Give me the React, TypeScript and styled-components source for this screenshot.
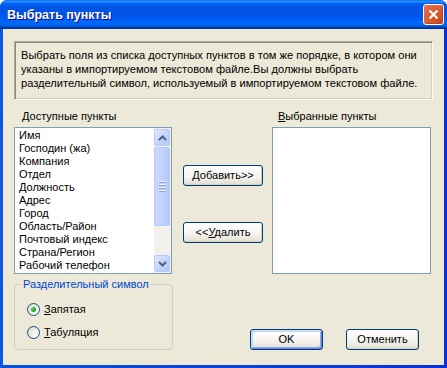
import React from 'react';
import styled, {createGlobalStyle} from 'styled-components';

const GlobalStyle = createGlobalStyle`
  html, body {
    margin: 0;
    padding: 0;
    background: #ffffff;
  }
  body {
    font-family: "Liberation Sans", Arial, sans-serif;
    font-size: 11px;
  }
`;

const AVAILABLE = [
  'Имя',
  'Господин (жа)',
  'Компания',
  'Отдел',
  'Должность',
  'Адрес',
  'Город',
  'Область/Район',
  'Почтовый индекс',
  'Страна/Регион',
  'Рабочий телефон',
];

const Window = styled.div`
  width: 447px;
  height: 368px;
  display: flex;
  flex-direction: column;
  background: linear-gradient(to right, #0831d9 0, #166aee 1px, #0855dd 2px, #0831d9 100%);
  border-radius: 7px 7px 0 0;
  overflow: hidden;
  color: #000;
`;

const TitleBar = styled.div`
  height: 29px;
  flex: none;
  display: flex;
  align-items: center;
  justify-content: space-between;
  padding: 0 3px 0 7px;
  background: linear-gradient(to bottom, #0058ee 0%, #3593ff 4%, #288eff 6%, #127dff 8%, #036ffc 10%, #0262ee 14%, #0057e5 20%, #0054e3 24%, #0055eb 56%, #005bf5 66%, #026afe 76%, #0062ef 86%, #0052d6 92%, #0040ab 94%, #003092 100%);
`;

const Title = styled.span`
  color: #fff;
  font-family: "Liberation Sans", Arial, sans-serif;
  font-weight: bold;
  font-size: 12.5px;
  text-shadow: 1px 1px #0f1089;
`;

const CloseButton = styled.div`
  width: 21px;
  height: 21px;
  box-sizing: border-box;
  border: 1px solid #fff;
  border-radius: 3px;
  background: radial-gradient(circle at 85% 85%, #c94a1c 0%, #dd5a33 55%, #e5765a 100%);
  box-shadow: inset -1px -1px #c0441a;
  display: flex;
  align-items: center;
  justify-content: center;
`;

const Client = styled.div`
  flex: 1;
  margin: 0 3px 3px 3px;
  background: #ece9d8;
  padding: 12px 11px 0 11px;
  display: flex;
  flex-direction: column;
`;

const InfoBox = styled.div`
  height: 59px;
  box-sizing: border-box;
  border: 1px solid;
  border-color: #aca899 #ffffff #ffffff #aca899;
  box-shadow: inset 1px 1px #8e8b7c, inset -1px -1px #d4d0c0;
  padding: 6px 6px;
  line-height: 14px;
  white-space: nowrap;
  font-size: 11.1px;
`;

const Lists = styled.div`
  margin-top: 9px;
  display: grid;
  grid-template-columns: 158px 80px 157px;
  column-gap: 11px;
  row-gap: 4px;
  & > :nth-child(3n) {
    margin-left: -2px;
  }
`;

const Label = styled.div<{$pad?: number}>`
  line-height: 14px;
  padding-left: ${p => p.$pad ?? 8}px;
`;

const ListBox = styled.div`
  height: 147px;
  box-sizing: border-box;
  border: 1px solid #7f9db9;
  background: #fff;
  display: flex;
`;

const Items = styled.div`
  flex: 1;
  padding: 1px 0 0 4px;
  overflow: hidden;
`;

const Item = styled.div`
  line-height: 13px;
  height: 13px;
  white-space: nowrap;
  font-size: 11px;
`;

const ScrollBar = styled.div`
  width: 17px;
  flex: none;
  display: flex;
  flex-direction: column;
  background: #f3f1ec;
  padding: 1px 1px 1px 0;
  box-sizing: border-box;
`;

const ScrollBtn = styled.div`
  height: 17px;
  flex: none;
  box-sizing: border-box;
  border: 1px solid #b9cbf3;
  border-radius: 2px;
  background: linear-gradient(to bottom right, #e2eafe 0%, #c5d5fc 50%, #b2c6f6 100%);
  display: flex;
  align-items: center;
  justify-content: center;
`;

const Thumb = styled.div`
  margin-top: 1px;
  height: 79px;
  flex: none;
  box-sizing: border-box;
  border: 1px solid #b9cbf3;
  border-radius: 2px;
  background: linear-gradient(to right, #c9d8fc 0%, #c3d4fd 50%, #b5c8f6 100%);
  display: flex;
  flex-direction: column;
  align-items: center;
  justify-content: center;
  gap: 1px;
`;

const Grip = styled.div`
  width: 7px;
  height: 1px;
  background: #eef3fe;
  box-shadow: 0 1px #8ca6dd;
  margin-bottom: 1px;
`;

const Track = styled.div`
  flex: 1;
`;

const Middle = styled.div`
  display: flex;
  flex-direction: column;
  padding-top: 38px;
  gap: 36px;
`;

const XpButton = styled.button<{$default?: boolean; $w?: number}>`
  width: ${p => p.$w ?? 80}px;
  height: 21px;
  padding: 0;
  box-sizing: border-box;
  border: 1px solid #003c74;
  border-radius: 3px;
  background: linear-gradient(to bottom, #ffffff 0%, #f4f3ee 60%, #e6e3d6 90%, #d6d0c5 100%);
  box-shadow: ${p => p.$default
    ? 'inset 1px 1px #cee7ff, inset -1px -1px #6982ee, inset 2px 2px #bcd4f6, inset -2px -2px #89ade4'
    : 'inset -1px -1px #d6d0c5'};
  font-family: "Liberation Sans", Arial, sans-serif;
  font-size: 11px;
  color: #000;
  line-height: 19px;
`;

const Bottom = styled.div`
  display: flex;
  align-items: flex-end;
  margin-top: 4px;
`;

const Group = styled.fieldset`
  width: 159px;
  box-sizing: border-box;
  margin: 0;
  padding: 0 0 9px 6px;
  border: 1px solid #d0d0bf;
  border-radius: 4px;
`;

const Legend = styled.legend`
  padding: 0 2px;
  color: #0046d5;
  line-height: 13px;
  font-size: 11px;
`;

const RadioRow = styled.label`
  display: flex;
  align-items: center;
  height: 16px;
  margin: 10px 0 0 6px;
  & + & {
    margin-top: 7px;
  }
  font-size: 11px;
`;

const RadioCircle = styled.span<{$on?: boolean}>`
  width: 13px;
  height: 13px;
  box-sizing: border-box;
  border-radius: 50%;
  border: 1px solid #1c5180;
  background: radial-gradient(circle at 70% 70%, #ffffff 0%, #e6e6e0 60%, #cfcdc3 100%);
  margin-right: 4px;
  display: flex;
  align-items: center;
  justify-content: center;
  &::after {
    content: '';
    display: ${p => p.$on ? 'block' : 'none'};
    width: 5px;
    height: 5px;
    border-radius: 50%;
    background: radial-gradient(circle at 35% 35%, #5cd85c 0%, #21a121 60%, #1a8a1a 100%);
  }
`;

const Actions = styled.div`
  margin-left: auto;
  margin-right: 14px;
  display: flex;
  gap: 23px;
`;

const Arrow = ({down}: {down?: boolean}) => (
  <svg width="9" height="6" viewBox="0 0 9 6">
    <path
      d={down ? 'M1 1 L4.5 4.5 L8 1' : 'M1 5 L4.5 1.5 L8 5'}
      fill="none"
      stroke="#4d6185"
      strokeWidth="2"
    />
  </svg>
);

const App = () => {
  return (
    <>
      <GlobalStyle/>
      <Window>
        <TitleBar>
          <Title>Выбрать пункты</Title>
          <CloseButton>
            <svg width="11" height="11" viewBox="0 0 11 11">
              <path d="M1.5 1.5 L9.5 9.5 M9.5 1.5 L1.5 9.5" stroke="#fff" strokeWidth="2.2"/>
            </svg>
          </CloseButton>
        </TitleBar>
        <Client>
          <InfoBox>
            Выбрать поля из списка доступных пунктов в том же порядке, в котором они<br/>
            указаны в импортируемом текстовом файле.Вы должны выбрать<br/>
            разделительный символ, используемый в импортируемом текстовом файле.
          </InfoBox>
          <Lists>
            <Label><u>Д</u>оступные пункты</Label>
            <div/>
            <Label $pad={6}><u>В</u>ыбранные пункты</Label>
            <ListBox>
              <Items>
                {AVAILABLE.map(name => <Item key={name}>{name}</Item>)}
              </Items>
              <ScrollBar>
                <ScrollBtn><Arrow/></ScrollBtn>
                <Thumb>
                  <Grip/><Grip/><Grip/><Grip/>
                </Thumb>
                <Track/>
                <ScrollBtn><Arrow down/></ScrollBtn>
              </ScrollBar>
            </ListBox>
            <Middle>
              <XpButton><u>Д</u>обавить&gt;&gt;</XpButton>
              <XpButton>&lt;&lt;<u>У</u>далить</XpButton>
            </Middle>
            <ListBox/>
          </Lists>
          <Bottom>
            <Group>
              <Legend>Разделительный символ</Legend>
              <RadioRow><RadioCircle $on/><span><u>З</u>апятая</span></RadioRow>
              <RadioRow><RadioCircle/><span><u>Т</u>абуляция</span></RadioRow>
            </Group>
            <Actions>
              <XpButton $default $w={73}>OK</XpButton>
              <XpButton $w={73}>Отменить</XpButton>
            </Actions>
          </Bottom>
        </Client>
      </Window>
    </>
  );
};

export default App;
